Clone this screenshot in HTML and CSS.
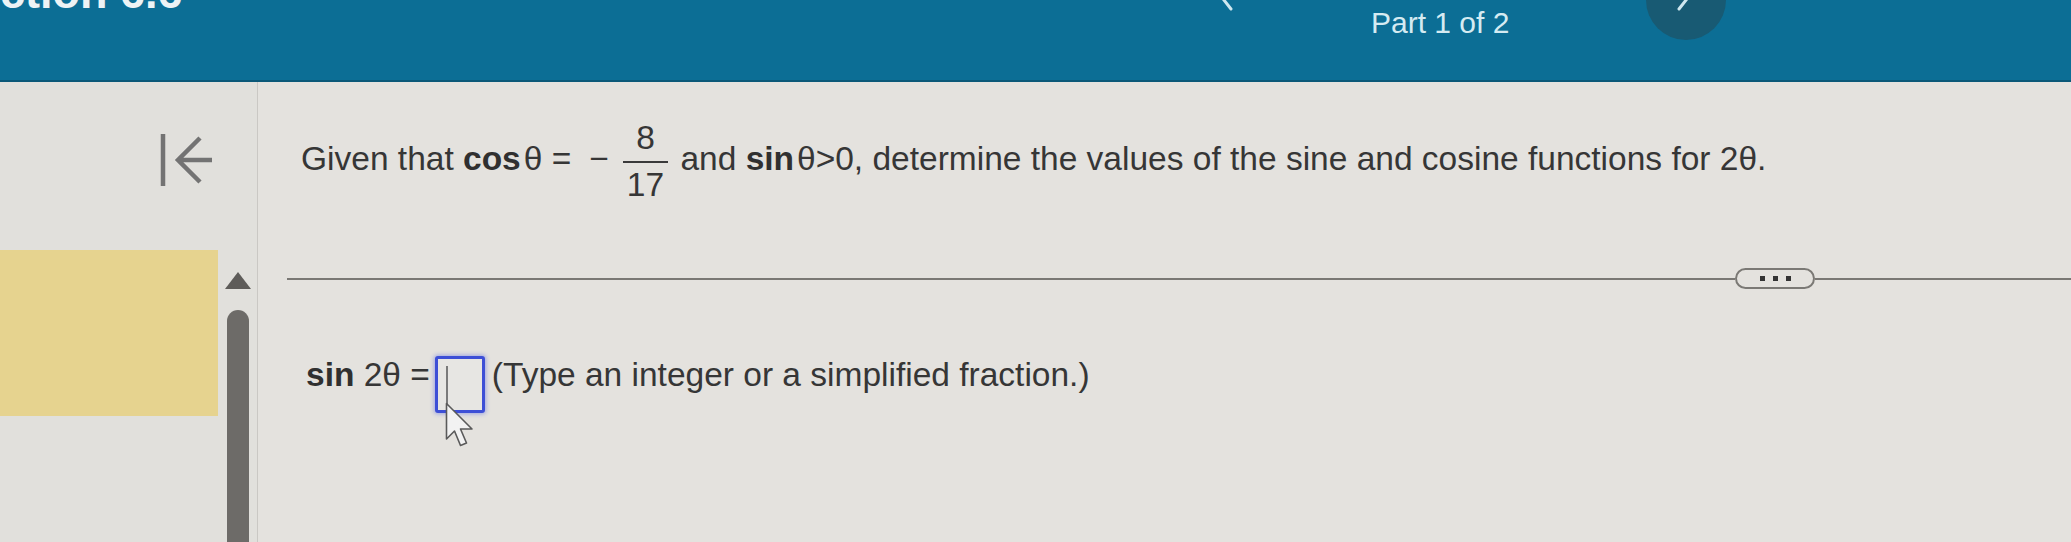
FILE: index.html
```html
<!DOCTYPE html>
<html lang="en">
<head>
<meta charset="utf-8">
<title>Section 6.6 – Part 1 of 2</title>
<link rel="stylesheet" href="styles.css">
</head>
<body>
<header class="topbar">
  <div class="course-title">Section 6.6</div>
  <nav class="part-nav">
    <button class="nav-btn nav-btn--prev" aria-label="Previous part">
      <svg class="chev" width="22" height="34" viewBox="0 0 22 34"><path d="M16 3 L5 17 L16 31"/></svg>
    </button>
    <span class="part-label">Part 1 of 2</span>
    <button class="nav-btn nav-btn--next" aria-label="Next part">
      <svg class="chev" width="22" height="34" viewBox="0 0 22 34"><path d="M6 3 L17 17 L6 31"/></svg>
    </button>
  </nav>
</header>
<main class="workspace">
  <aside class="rail">
    <div class="rail-top">
      <svg class="back-icon" width="52" height="56" viewBox="0 0 52 56"><path d="M3 2 V54"/><path d="M40 6 L18 28 L40 50 M18 28 H52"/></svg>
    </div>
    <div class="rail-bottom">
      <div class="rail-note"></div>
      <div class="scroller">
        <span class="scroll-up"></span>
        <span class="scroll-thumb"></span>
      </div>
    </div>
  </aside>
  <section class="question">
    <p class="prompt">Given that <b class="fn">cos</b>θ =<span class="minus">−</span><span class="frac"><span class="num">8</span><span class="den">17</span></span> and <b class="fn">sin</b>θ&gt;0, determine the values of the sine and cosine functions for 2θ.</p>
    <div class="divider">
      <span class="rule"></span>
      <span class="more"><i></i><i></i><i></i></span>
      <span class="rule rule--end"></span>
    </div>
    <p class="answer"><b>sin</b> 2θ =<span class="answer-box"><span class="caret"></span><svg class="pointer" width="30" height="46" viewBox="0 0 30 46"><path d="M1.5 1.5 L1.5 37 L9.5 29 L15.5 43.5 L21.5 41 L15.5 27 L27 27 Z"/></svg></span>(Type an integer or a simplified fraction.)</p>
  </section>
</main>
</body>
</html>
```
FILE: styles.css
```css
* { box-sizing: border-box; }
html, body { margin: 0; }
body {
  width: 2071px;
  height: 542px;
  overflow: hidden;
  background: #e4e2de;
  font-family: "Liberation Sans", Arial, sans-serif;
  color: #363636;
}

/* ---------- top bar ---------- */
.topbar {
  height: 82px;
  background: #0c6e95;
  border-bottom: 2px solid #0a5878;
  display: flex;
  align-items: flex-start;
  padding-right: 345px;
  overflow: hidden;
}
.course-title {
  font-size: 45px;
  font-weight: 700;
  line-height: 45px;
  color: #edf3f5;
  margin: -30px 0 0 -55px;
  white-space: nowrap;
}
.part-nav {
  margin-left: auto;
  width: 544px;
  display: flex;
  align-items: flex-start;
}
.nav-btn {
  flex: none;
  width: 80px;
  height: 80px;
  margin-top: -40px;
  border: 0;
  border-radius: 50%;
  padding: 0 0 10px 8px;
  background: transparent;
  display: flex;
  align-items: center;
  justify-content: center;
}
.nav-btn--next {
  margin-left: auto;
  background: #185a73;
  padding: 0 4px 10px 0;
}
.chev path {
  fill: none;
  stroke: #cfe7ef;
  stroke-width: 3;
  stroke-linecap: round;
  stroke-linejoin: round;
}
.part-label {
  margin: 6px 0 0 109px;
  font-size: 30px;
  color: #d5ebf2;
  white-space: nowrap;
}

/* ---------- workspace ---------- */
.workspace {
  display: flex;
  height: 460px;
}
.rail {
  flex: none;
  width: 258px;
  background: #e1e0dc;
  border-right: 1px solid #cac8c4;
  display: flex;
  flex-direction: column;
}
.rail-top {
  height: 168px;
  padding: 50px 0 0 160px;
}
.back-icon path {
  fill: none;
  stroke: #737373;
  stroke-width: 4.5;
}
.rail-bottom {
  flex: 1;
  display: flex;
  align-items: flex-start;
}
.rail-note {
  flex: none;
  width: 218px;
  height: 166px;
  background: #e6d38f;
}
.scroller {
  align-self: stretch;
  width: 28px;
  margin-left: 6px;
  padding-top: 22px;
  display: flex;
  flex-direction: column;
  align-items: center;
  gap: 21px;
}
.scroll-up {
  width: 0;
  height: 0;
  border-left: 13px solid transparent;
  border-right: 13px solid transparent;
  border-bottom: 17px solid #5e5c59;
}
.scroll-thumb {
  flex: 1;
  width: 22px;
  background: #6d6b68;
  border-radius: 11px 11px 0 0;
}

/* ---------- question ---------- */
.question {
  flex: 1;
  padding: 41px 0 0 29px;
}
.prompt {
  margin: 0 0 0 14px;
  font-size: 33.5px;
  line-height: 40px;
  white-space: nowrap;
}
.prompt b, .answer b { font-weight: 700; color: #303030; }
.fn { margin-right: 3px; }
.minus { margin: 0 2px 0 18px; }
.frac {
  display: inline-flex;
  flex-direction: column;
  vertical-align: middle;
  text-align: center;
  margin: 0 3px 0 12px;
}
.num {
  line-height: 30px;
  padding: 0 4px 8px;
  border-bottom: 2px solid #3a3a3a;
}
.den {
  line-height: 30px;
  padding: 7px 4px 0;
}

.divider {
  margin-top: 68px;
  height: 21px;
  display: flex;
  align-items: center;
}
.rule {
  flex: 1;
  height: 2px;
  background: #7a7874;
}
.rule--end { flex: none; width: 256px; }
.more {
  flex: none;
  width: 80px;
  height: 21px;
  border: 2px solid #7b7975;
  border-radius: 11px;
  display: flex;
  align-items: center;
  justify-content: center;
  gap: 8px;
}
.more i {
  width: 5px;
  height: 5px;
  background: #333;
}

.answer {
  margin: 66px 0 0 19px;
  font-size: 33.5px;
  line-height: 40px;
  white-space: nowrap;
}
.answer-box {
  position: relative;
  display: inline-flex;
  vertical-align: -18px;
  width: 50px;
  height: 57px;
  margin: 0 7px 0 5px;
  padding: 7px 0 0 8px;
  border: 3px solid #3d4fd6;
  border-radius: 3px;
  background: #e7e6e3;
  box-shadow: 0 0 4px 1px rgba(70, 90, 230, 0.45);
}
.caret {
  width: 2px;
  height: 38px;
  background: #7a7a7a;
}
.pointer {
  position: absolute;
  left: 7px;
  top: 43px;
}
.pointer path {
  fill: #f2f2f2;
  stroke: #5a5a5a;
  stroke-width: 1.6;
  stroke-linejoin: round;
}
```
